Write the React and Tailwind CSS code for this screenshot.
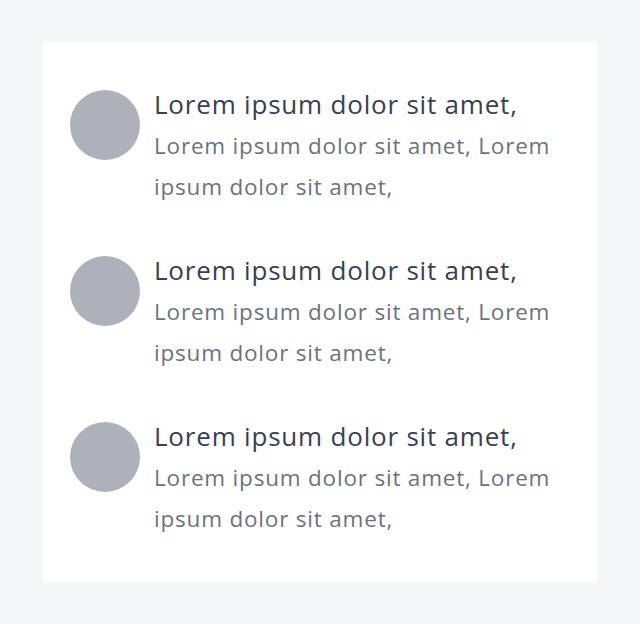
const items = [1, 2, 3];

export default function App() {
  return (
    <div
      className="min-h-[624px] bg-[#f6f7f9] px-[43px] pt-[42px]"
      style={{ fontFamily: '"Open Sans", sans-serif' }}
    >
      <div className="bg-white w-[554px] h-[540px] px-[27px] pt-[48px] flex flex-col gap-[49px]">
        {items.map((i) => (
          <div key={i} className="flex items-start gap-[14px]">
            <div className="w-[70px] h-[70px] rounded-full bg-[#adb1ba] shrink-0"></div>
            <div className="-mt-[4px]">
              <div className="text-[26px] leading-[36px] tracking-[0.8px] text-[#374151]">
                Lorem ipsum dolor sit amet,
              </div>
              <div className="mt-[3px] text-[22.5px] leading-[41px] tracking-[0.8px] text-[#6b7280]">
                Lorem ipsum dolor sit amet, Lorem ipsum dolor sit amet,
              </div>
            </div>
          </div>
        ))}
      </div>
    </div>
  );
}
